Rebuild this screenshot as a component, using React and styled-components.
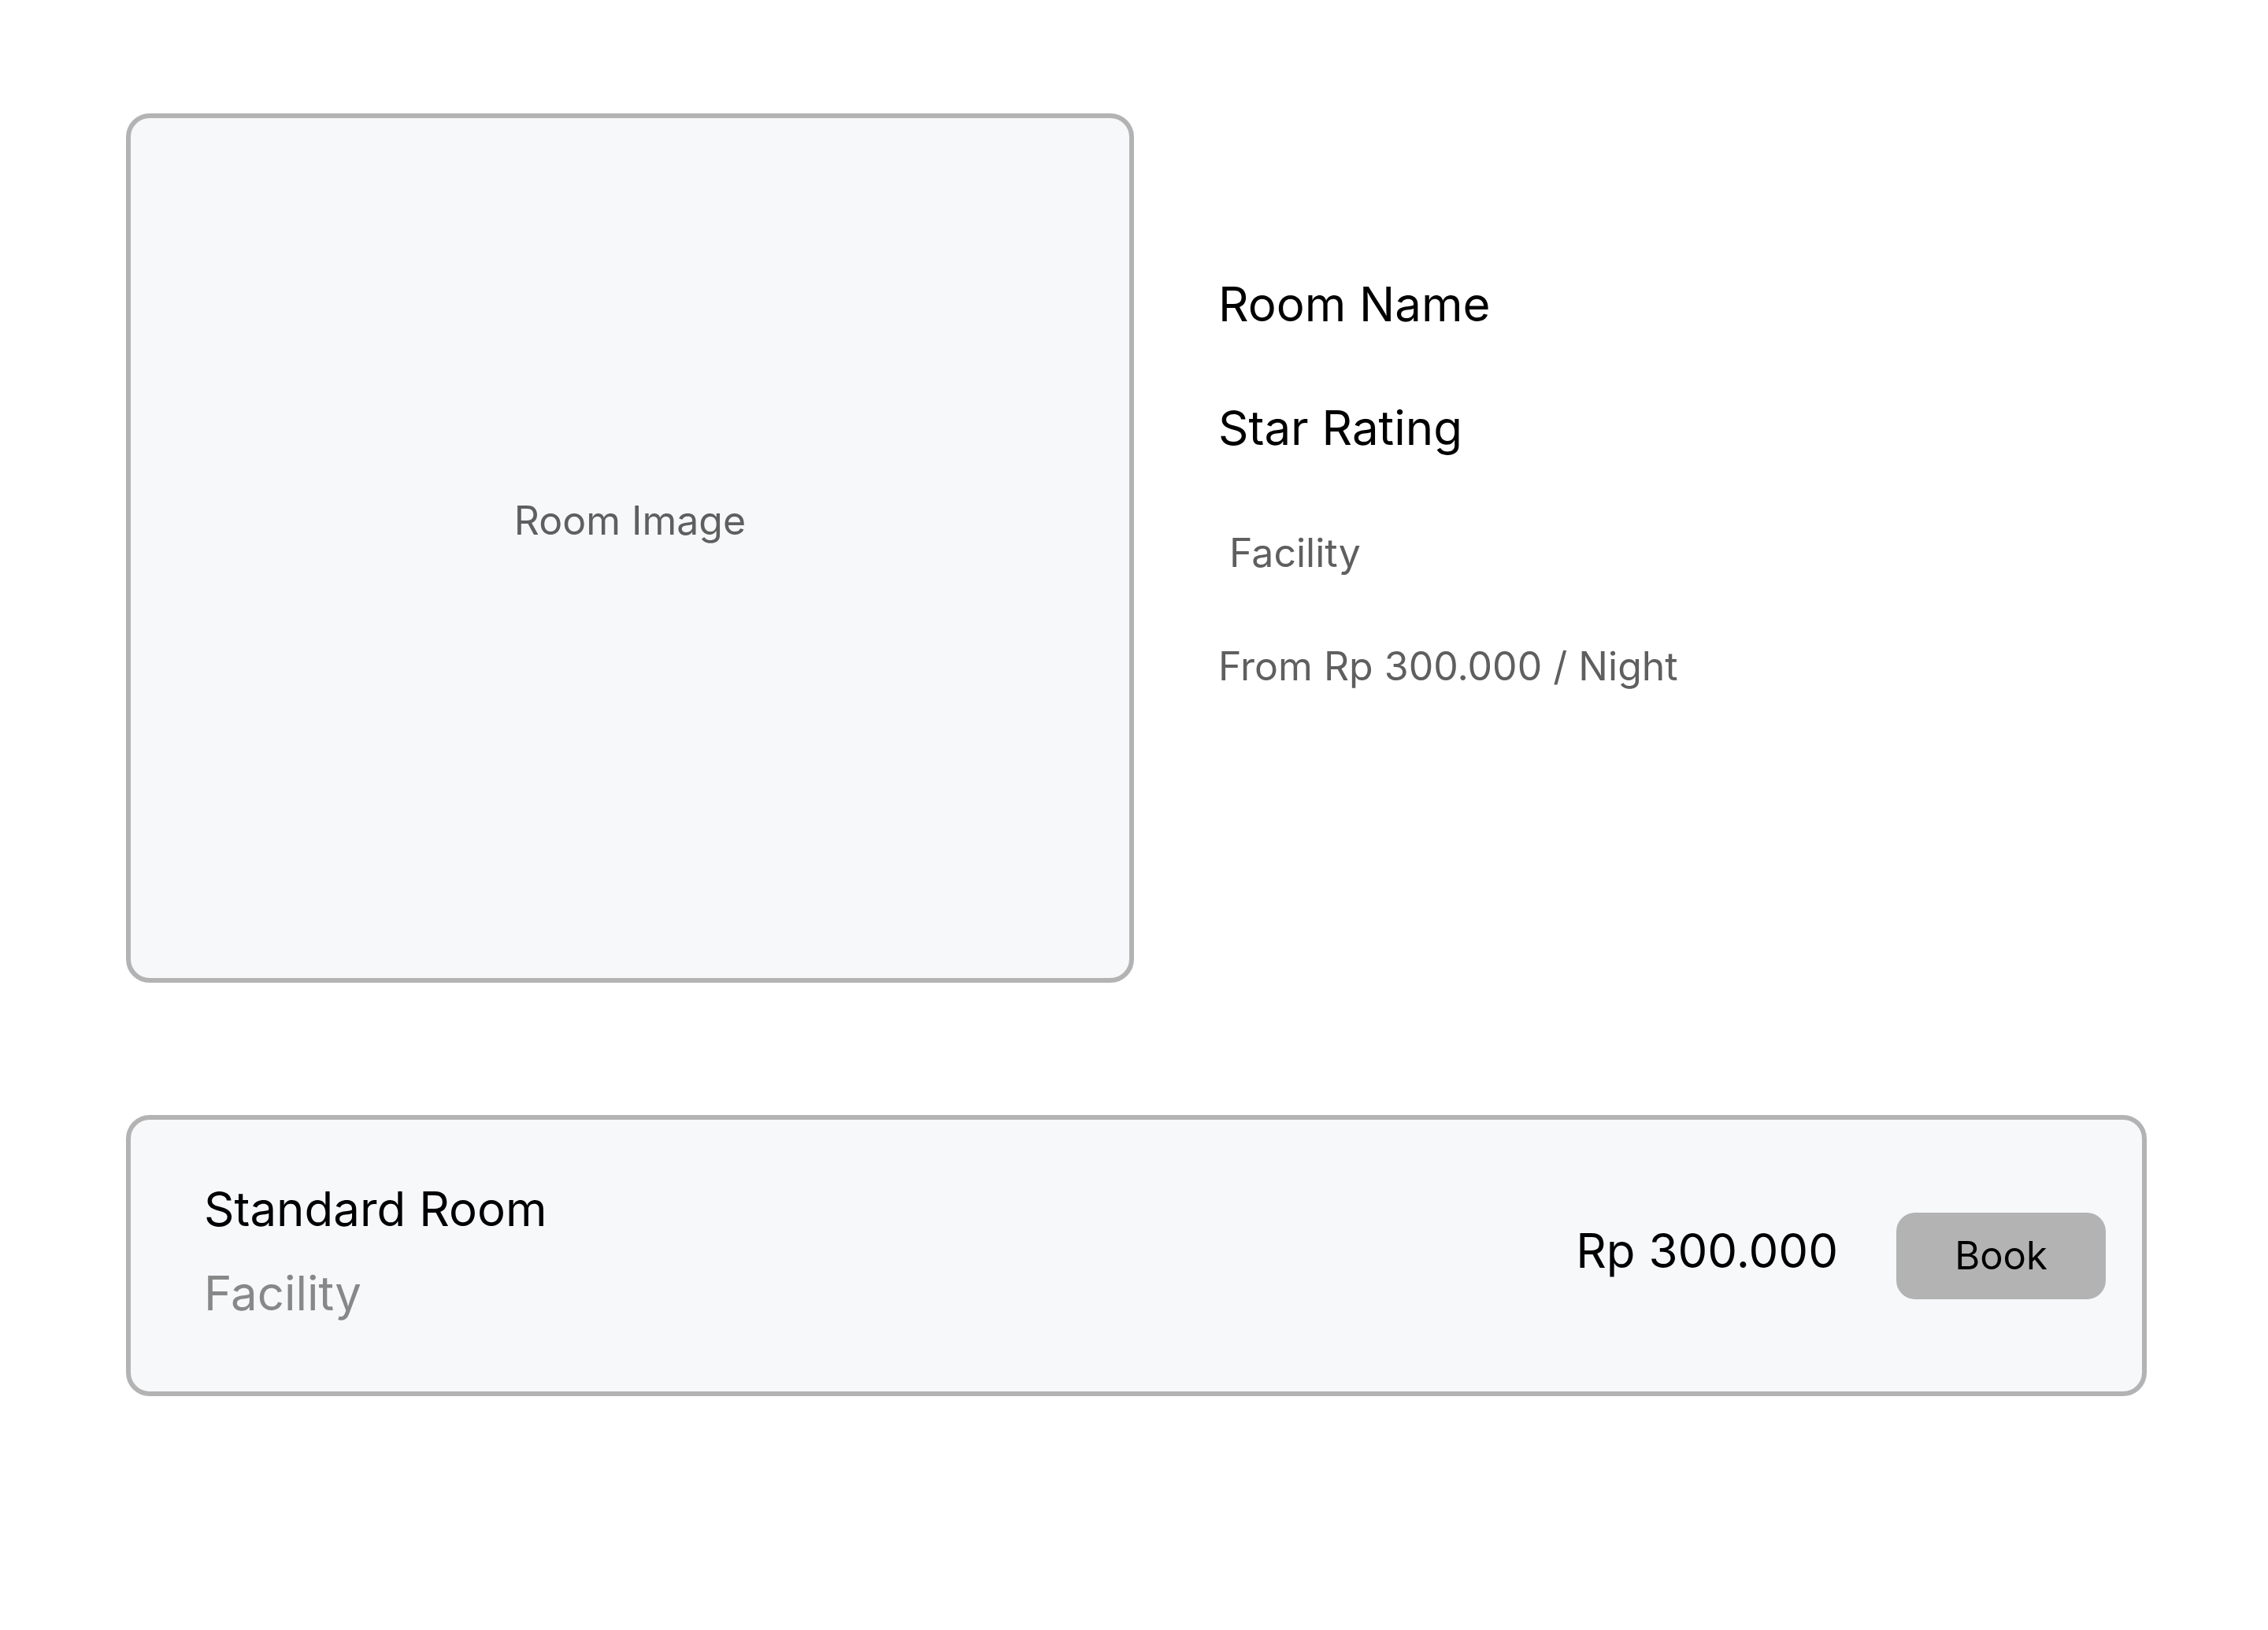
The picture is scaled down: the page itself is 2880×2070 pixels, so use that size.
import React from "react";
import styled, { createGlobalStyle } from "styled-components";

const GlobalStyle = createGlobalStyle`
  html, body {
    margin: 0;
    padding: 0;
    background: #ffffff;
  }
  body {
    font-family: Inter, "Noto Sans", "Liberation Sans", sans-serif;
    color: #000;
  }
  * { box-sizing: border-box; }
`;

const Page = styled.div`
  padding: 144px 0 0 160px;
  width: 2880px;
`;

const TopRow = styled.div`
  display: flex;
  align-items: flex-start;
  gap: 107px;
`;

const ImageBox = styled.div`
  width: 1280px;
  height: 1104px;
  border: 6px solid #b3b3b3;
  border-radius: 30px;
  background: #f7f8fa;
  display: flex;
  align-items: center;
  justify-content: center;
  padding-bottom: 70px;
`;

const ImageLabel = styled.span`
  font-size: 50px;
  color: #5f5f5f;
`;

const Info = styled.div`
  display: flex;
  flex-direction: column;
  padding-top: 206px;
`;

const InfoTitle = styled.div`
  font-size: 60px;
  color: #000;
  margin-top: ${(p) => p.$gap || 0}px;
`;

const InfoMeta = styled.div`
  font-size: 50px;
  color: #5f5f5f;
  white-space: pre;
  margin-top: ${(p) => p.$gap || 0}px;
`;

const RoomCard = styled.div`
  margin-top: 168px;
  width: 2566px;
  height: 357px;
  border: 6px solid #b3b3b3;
  border-radius: 30px;
  background: #f7f8fa;
  display: flex;
  align-items: center;
  justify-content: space-between;
  padding: 0 46px 0 93px;
`;

const RoomText = styled.div`
  display: flex;
  flex-direction: column;
  gap: 35px;
  margin-top: -12px;
`;

const RoomName = styled.div`
  font-size: 60px;
  color: #000;
`;

const RoomFacility = styled.div`
  font-size: 60px;
  color: #888888;
`;

const RoomActions = styled.div`
  display: flex;
  align-items: center;
  gap: 74px;
`;

const Price = styled.div`
  font-size: 60px;
  color: #000;
  margin-top: -14px;
`;

const BookButton = styled.button`
  width: 266px;
  height: 110px;
  border: none;
  border-radius: 24px;
  background: #b3b3b3;
  font-family: inherit;
  font-size: 49px;
  color: #000;
  padding: 0;
  cursor: pointer;
`;

export default function App() {
  return (
    <>
      <GlobalStyle />
      <Page>
        <TopRow>
          <ImageBox>
            <ImageLabel>Room Image</ImageLabel>
          </ImageBox>
          <Info>
            <InfoTitle>Room Name</InfoTitle>
            <InfoTitle $gap={85}>Star Rating</InfoTitle>
            <InfoMeta $gap={93}> Facility</InfoMeta>
            <InfoMeta $gap={84}>From Rp 300.000 / Night</InfoMeta>
          </Info>
        </TopRow>
        <RoomCard>
          <RoomText>
            <RoomName>Standard Room</RoomName>
            <RoomFacility>Facility</RoomFacility>
          </RoomText>
          <RoomActions>
            <Price>Rp 300.000</Price>
            <BookButton>Book</BookButton>
          </RoomActions>
        </RoomCard>
      </Page>
    </>
  );
}
